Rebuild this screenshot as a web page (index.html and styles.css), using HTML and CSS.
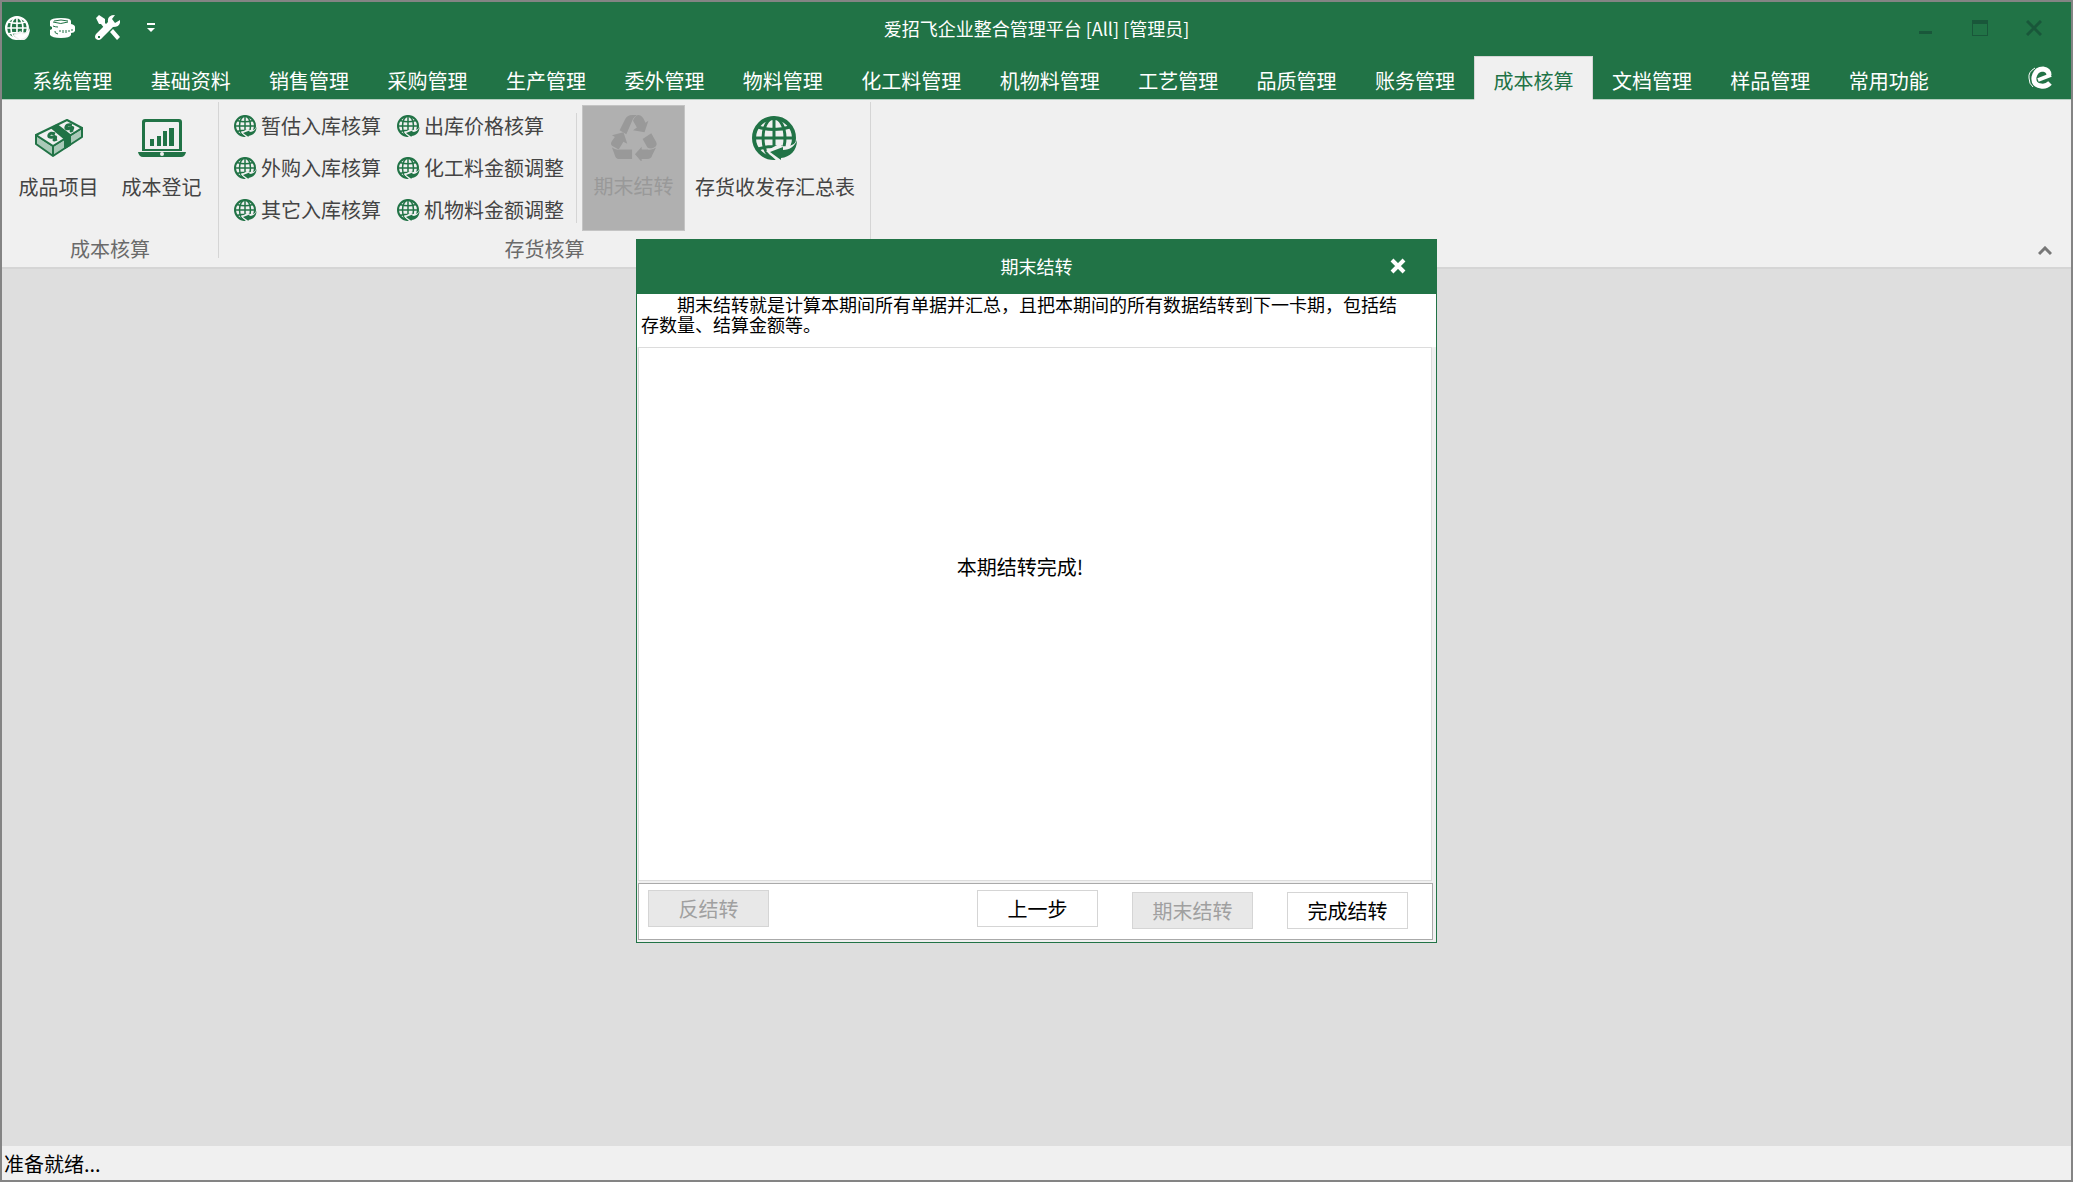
FILE: index.html
```html
<!DOCTYPE html>
<html lang="zh-CN">
<head>
<meta charset="utf-8">
<meta name="viewport" content="width=device-width, initial-scale=1">
<title>爱招飞企业整合管理平台</title>
<link rel="stylesheet" href="styles.css">
</head>
<body>
<svg class="sprite" aria-hidden="true">
  <symbol id="globe" viewBox="0 0 46 44">
    <g fill="none" stroke="currentColor" stroke-width="3">
      <circle cx="22" cy="22" r="20" stroke-width="4"/>
      <ellipse cx="22" cy="22" rx="11" ry="20"/>
      <path d="M22 2V42M2 22H42M6 11Q22 16 38 11M6 33Q22 28 38 33"/>
    </g>
    <path class="globe-gap" d="M46 20C45 29 38 31 29 30V27L14 35L26 46H30C40 44 46 36 46 20Z"/>
    <path fill="currentColor" d="M45 24C45 35 38 41 29 42L29 44L18 36L31 31V34C38 34 43 30 45 24Z"/>
  </symbol>
</svg>

<div class="window">
  <header class="header">
    <div class="titlebar">
      <div class="quick">
        <button class="bare" aria-label="浏览"><svg width="25" height="24"><use href="#globe"/></svg></button>
        <button class="bare" aria-label="成本">
          <svg width="25" height="20" viewBox="0 0 25 20">
            <path fill="#fff" d="M0 3Q1 0 11 0T21 3V6Q25 7 25 9V13Q24 15 21 15V17Q20 20 11 20T0 17V12L2 11V9L0 8Z"/>
            <path fill="none" stroke="#217346" d="M3 4Q11 7 18 4M3 8Q5 9 8 9M5 13Q4 15 8 16M10 12V14M13 12V15M16 12V15M19 12V14M22 11V13M4 3Q11 1 18 3"/>
          </svg>
        </button>
        <button class="bare" aria-label="工具">
          <svg width="25" height="25" viewBox="0 0 25 25" fill="#fff">
            <path d="M1 3L4 0L10 4V8L13 11L10 14L6 9H4ZM15 17L18 14L25 22L22 25Z"/>
            <path d="M20 0L17 4L20 8L25 5Q26 12 18 12L6 24Q4 26 1 24Q-1 22 1 19L13 7Q12 0 20 0ZM3 21V23H5V21Z"/>
          </svg>
        </button>
        <button class="bare" aria-label="自定义快速访问工具栏">
          <svg width="8" height="10" viewBox="0 0 8 10" fill="#fff"><path d="M0 0H8V2H0ZM0 5H8L4 9Z"/></svg>
        </button>
      </div>
      <h1 class="title">爱招飞企业整合管理平台 [All] [管理员]</h1>
      <div class="controls">
        <button class="bare" aria-label="最小化"><svg width="16" height="16"><path fill="currentColor" d="M1 11H14V14H1Z"/></svg></button>
        <button class="bare" aria-label="最大化"><svg width="16" height="16"><path fill="currentColor" fill-rule="evenodd" d="M0 0H16V16H0ZM1 4V15H15V4Z"/></svg></button>
        <button class="bare" aria-label="关闭"><svg width="16" height="16"><path fill="none" stroke="currentColor" stroke-width="3" d="M1 1L15 15M15 1L1 15"/></svg></button>
      </div>
    </div>
    <div class="tabbar">
      <nav class="tabs">
        <button class="tab">系统管理</button>
        <button class="tab">基础资料</button>
        <button class="tab">销售管理</button>
        <button class="tab">采购管理</button>
        <button class="tab">生产管理</button>
        <button class="tab">委外管理</button>
        <button class="tab">物料管理</button>
        <button class="tab">化工料管理</button>
        <button class="tab">机物料管理</button>
        <button class="tab">工艺管理</button>
        <button class="tab">品质管理</button>
        <button class="tab">账务管理</button>
        <button class="tab active">成本核算</button>
        <button class="tab">文档管理</button>
        <button class="tab">样品管理</button>
        <button class="tab">常用功能</button>
      </nav>
      <svg class="logo" width="25" height="24" viewBox="0 0 25 24" fill="none" stroke="#fff">
        <path stroke-width="5" d="M22 17Q18 21 13 20Q5 19 6 11Q8 3 15 3Q21 4 21 9"/>
        <path stroke-width="4" d="M23 9L10 14"/>
        <path stroke-width="1" d="M7 2Q0 6 1 12Q1 18 5 21"/>
      </svg>
    </div>
  </header>

  <section class="ribbon">
    <div class="group">
      <div class="group-body">
        <button class="big">
          <svg width="48" height="38" viewBox="0 0 48 38" stroke="#217346" stroke-width="2" stroke-linejoin="round">
            <path fill="#a9c9b7" d="M1 16L18 27L47 9V18L18 37L1 25Z"/>
            <path fill="#f0f0f0" d="M1 16L32 1L47 9L18 27Z"/>
            <path fill="none" d="M18 27V37"/>
            <path fill="#217346" d="M17 9L22 6L35 16V26L30 29V20Z"/>
            <path fill="none" stroke-width="3" d="M20 15Q15 13 14 16T18 18T19 21L22 20M37 6Q32 5 31 8T35 9T36 12L38 11"/>
          </svg>
          <span>成品项目</span>
        </button>
        <button class="big">
          <svg width="48" height="38" viewBox="0 0 48 38" fill="#217346">
            <path fill-rule="evenodd" d="M7 0H41Q44 0 44 3V32H4V3Q4 0 7 0ZM8 3Q7 3 7 4V30H41V4Q41 3 40 3Z"/>
            <path fill-rule="evenodd" d="M0 33H48Q47 38 43 38H5Q1 38 0 33ZM24 33A2 2 0 1 0 24 37A2 2 0 1 0 24 33Z"/>
            <path d="M12 20H16V27H12ZM19 17H23V27H19ZM25 12H29V27H25ZM31 9H36V27H31Z"/>
          </svg>
          <span>成本登记</span>
        </button>
      </div>
      <div class="group-name">成本核算</div>
    </div>
    <div class="group">
      <div class="group-body">
        <div class="smalls">
          <button class="small"><svg width="23" height="22"><use href="#globe"/></svg>暂估入库核算</button>
          <button class="small"><svg width="23" height="22"><use href="#globe"/></svg>外购入库核算</button>
          <button class="small"><svg width="23" height="22"><use href="#globe"/></svg>其它入库核算</button>
          <button class="small"><svg width="23" height="22"><use href="#globe"/></svg>出库价格核算</button>
          <button class="small"><svg width="23" height="22"><use href="#globe"/></svg>化工料金额调整</button>
          <button class="small"><svg width="23" height="22"><use href="#globe"/></svg>机物料金额调整</button>
        </div>
        <div class="divider"></div>
        <button class="big" disabled>
          <svg width="48" height="46" viewBox="0 0 48 48" fill="#999">
            <path d="M9 16L15 4Q17 0 22 0H27Q24 2 23 4L16 20Z"/>
            <path d="M28 0Q32 0 34 4L36 8L39 6L35 18L23 16L27 13L23 6Q24 2 28 0Z"/>
            <path d="M1 21L13 18L17 30L13 28L8 36L1 32Q-1 30 1 27L4 23Z"/>
            <path d="M1 34Q5 37 9 36H22V46H8Q5 46 4 42Z"/>
            <path d="M25 41L32 33V36H38Q43 37 47 34L43 42Q42 46 38 46H32V49Z"/>
            <path d="M33 25L42 19L47 28Q49 32 45 34Q42 36 38 34Z"/>
          </svg>
          <span>期末结转</span>
        </button>
        <button class="big wide">
          <svg width="46" height="44"><use href="#globe"/></svg>
          <span>存货收发存汇总表</span>
        </button>
      </div>
      <div class="group-name">存货核算</div>
    </div>
    <button class="bare collapse" aria-label="折叠功能区"><svg width="14" height="10"><path fill="none" stroke="#777" stroke-width="3" d="M1 8L7 2L13 8"/></svg></button>
  </section>

  <main class="workspace"></main>
  <footer class="status">准备就绪...</footer>
</div>

<div class="overlay">
  <section class="dialog" role="dialog" aria-labelledby="dialog-title">
    <header class="dialog-head">
      <h2 id="dialog-title">期末结转</h2>
      <button class="bare dialog-close" aria-label="关闭"><svg width="16" height="16"><path fill="none" stroke="#fff" stroke-width="4" d="M2 2L14 14M14 2L2 14"/></svg></button>
    </header>
    <p class="intro">期末结转就是计算本期间所有单据并汇总，且把本期间的所有数据结转到下一卡期，包括结存数量、结算金额等。</p>
    <div class="result">本期结转完成!</div>
    <footer class="actions">
      <button class="action" disabled>反结转</button>
      <button class="action back">上一步</button>
      <div class="finish">
        <button class="action" disabled>期末结转</button>
        <button class="action">完成结转</button>
      </div>
    </footer>
  </section>
</div>
</body>
</html>
```
FILE: styles.css
```css
* {
  box-sizing: border-box;
}

body {
  margin: 0;
  font: 20px/24px "Noto Sans CJK SC", sans-serif;
  color: #444;
}

button {
  margin: 0;
  padding: 0;
  border: 0;
  background: none;
  font: inherit;
  color: inherit;
  white-space: nowrap;
}

svg {
  display: block;
  flex: none;
}

.sprite {
  position: absolute;
  width: 0;
  height: 0;
}

.globe-gap {
  fill: #f0f0f0;
}

.window {
  display: flex;
  flex-direction: column;
  min-height: 100vh;
  border: 2px solid #848484;
  background: #dedede;
}

/* Title bar and tabs */

.header {
  background: #217346;
  color: #fff;
}

.header .globe-gap {
  fill: #217346;
}

.titlebar {
  display: grid;
  grid-template-columns: 1fr auto 1fr;
  align-items: center;
  height: 54px;
  padding-bottom: 3px;
}

.quick {
  display: flex;
  align-items: center;
  padding-left: 3px;
}

.quick .bare {
  margin-right: 20px;
}

.quick .bare:last-child {
  margin-left: 7px;
}

.title {
  margin: 0;
  font-size: 18px;
  font-weight: 400;
}

.controls {
  display: flex;
  justify-content: flex-end;
  gap: 38px;
  padding-right: 29px;
  color: #19573a;
}

.tabbar {
  display: flex;
  align-items: center;
  justify-content: space-between;
  padding-left: 11px;
  box-shadow: inset 0 -1px #b5cfc0;
}

.tabs {
  display: flex;
  flex: 1;
  margin-right: 80px;
}

.tab {
  flex: 1 0 auto;
  height: 44px;
  padding: 6px 18px 0;
  border: 1px solid transparent;
  border-bottom-color: #b5cfc0;
}

.tab.active {
  border-color: #d5d5d5 #d5d5d5 #f0f0f0;
  background: #f0f0f0;
  color: #217346;
}

.logo {
  margin-right: 18px;
}

/* Ribbon */

.ribbon {
  display: flex;
  padding: 2px 0 9px;
  border-bottom: 2px solid #d5d5d5;
  background: #f0f0f0;
}

.group {
  display: flex;
  flex-direction: column;
  padding: 3px 5px 0;
  border-right: 1px solid #d5d5d5;
}

.group-body {
  display: flex;
  height: 126px;
}

.group-name {
  padding-top: 9px;
  line-height: 18px;
  text-align: center;
  color: #6a6a6a;
}

.big {
  display: flex;
  flex-direction: column;
  align-items: center;
  justify-content: space-between;
  width: 103px;
  padding: 14px 0 32px;
}

.big svg {
  color: #217346;
}

.big:disabled {
  padding-top: 9px;
  border: 1px solid #c4c4c4;
  background: #b0b0b0;
  color: #999;
}

.big.wide {
  width: 180px;
  padding-top: 11px;
}

.smalls {
  display: grid;
  grid-template-rows: repeat(3, 42px);
  grid-auto-flow: column;
  column-gap: 16px;
  padding-left: 10px;
}

.small {
  display: flex;
  align-items: center;
  gap: 4px;
}

.small svg {
  color: #217346;
}

.divider {
  width: 1px;
  margin: 8px 5px 8px 12px;
  background: #d5d5d5;
}

.collapse {
  align-self: flex-end;
  margin: 0 19px 2px auto;
}

.workspace {
  flex: 1;
}

.status {
  height: 34px;
  padding: 6px 2px 4px;
  background: #f0f0f0;
  color: #000;
}

/* Dialog */

.overlay {
  position: fixed;
  inset: 0;
  display: grid;
  place-items: center;
}

.dialog {
  display: flex;
  flex-direction: column;
  width: 801px;
  max-width: 100%;
  border: 1px solid #217346;
  background: #f0f0f0;
  color: #000;
}

.dialog-head {
  display: grid;
  grid-template-columns: 1fr auto 1fr;
  align-items: center;
  height: 54px;
  padding-bottom: 2px;
  background: #217346;
  color: #fff;
}

.dialog-head h2 {
  grid-column: 2;
  margin: 0;
  font-size: 18px;
  font-weight: 400;
}

.dialog-close {
  justify-self: end;
  margin-right: 30px;
}

.intro {
  height: 53px;
  margin: 0;
  padding: 0 36px 0 4px;
  background: #fff;
  font-size: 18px;
  line-height: 20px;
  text-indent: 36px;
}

.result {
  display: flex;
  justify-content: center;
  height: 534px;
  margin: 0 4px 2px 1px;
  padding: 207px 30px 0 0;
  border: 1px solid #dcdcdc;
  background: #fff;
}

.actions {
  display: flex;
  align-items: flex-start;
  height: 57px;
  margin: 0 3px 2px 1px;
  padding: 6px 24px 0 9px;
  border: 1px solid #aaa;
  background: #fff;
}

.action {
  width: 121px;
  height: 37px;
  border: 1px solid #d5d5d5;
  background: #fff;
}

.action:disabled {
  background: #e8e8e8;
  color: #a0a0a0;
}

.back {
  margin-left: auto;
}

.finish {
  display: flex;
  gap: 34px;
  padding: 2px 0 0 34px;
}
```
